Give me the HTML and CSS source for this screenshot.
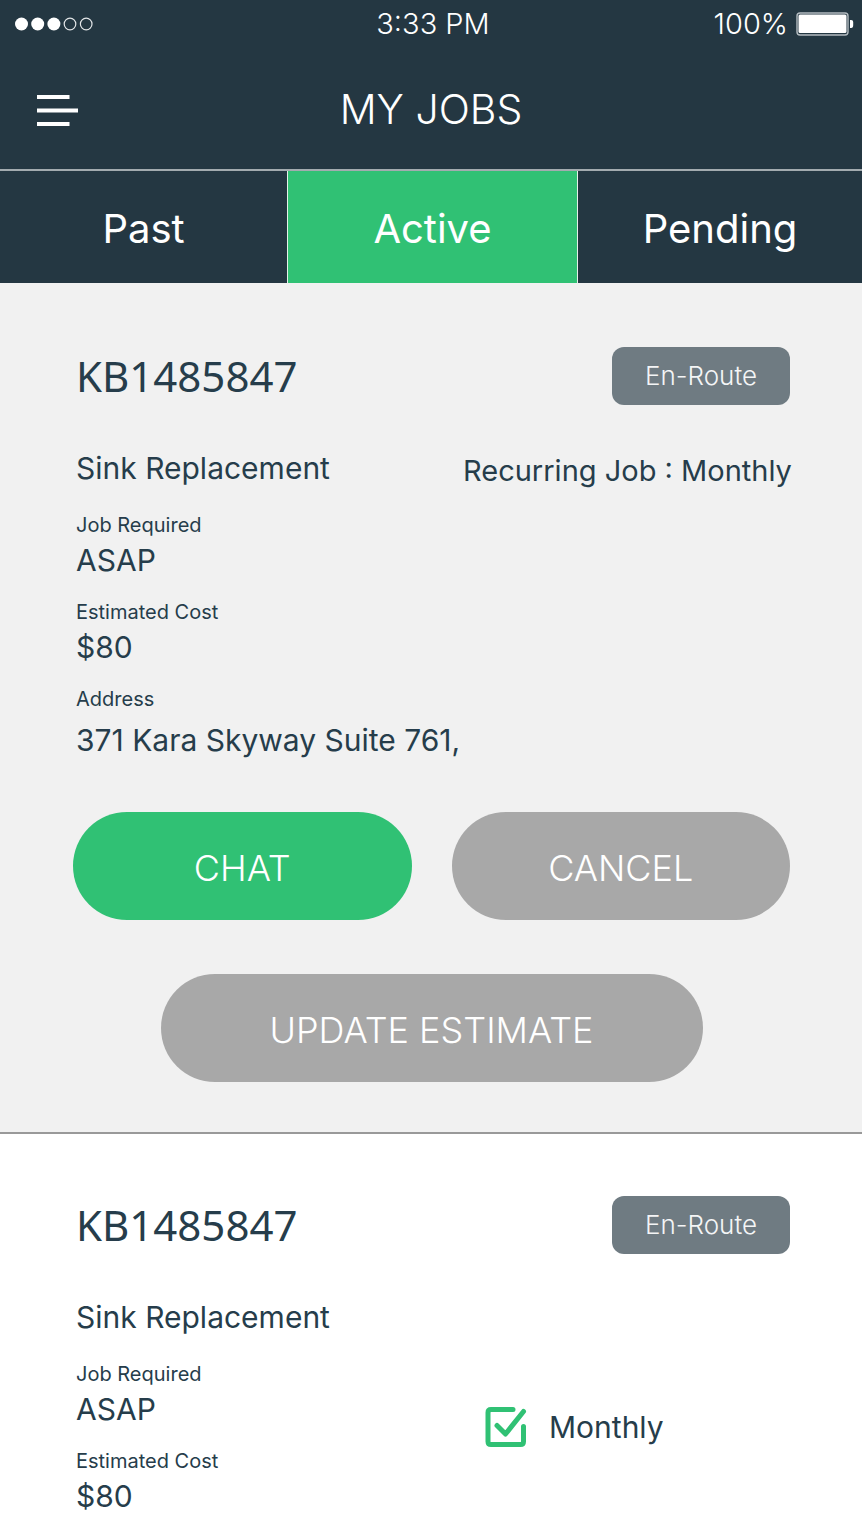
FILE: index.html
```html
<!DOCTYPE html>
<html lang="en">
<head>
<meta charset="utf-8">
<meta name="viewport" content="width=device-width, initial-scale=1">
<title>My Jobs</title>
<link rel="stylesheet" href="styles.css">
</head>
<body>
<header class="header">
  <div class="status">
    <svg class="signal" width="80" height="16" viewBox="0 0 80 16" aria-hidden="true">
      <g fill="#fff"><circle cx="7.500" cy="8" r="6.5"/><circle cx="23.700" cy="8" r="6.5"/><circle cx="39.900" cy="8" r="6.5"/></g>
      <g fill="none" stroke="#e3e6e8" stroke-width="1.2"><circle cx="56" cy="8" r="5.8"/><circle cx="72.200" cy="8" r="5.8"/></g>
    </svg>
    <span class="time">3:33 PM</span>
    <span class="battery">100%
      <svg width="58" height="24" viewBox="0 0 58 24" aria-hidden="true">
        <rect x="1" y="1" width="51" height="22" rx="3" fill="none" stroke="#b4bcc1" stroke-width="1.4"/>
        <rect x="2.5" y="2.5" width="48" height="18.5" rx="1.5" fill="#fff"/>
        <path d="M54 8h1.2q2 0 2 2v3q0 3-2 3H54z" fill="#fff"/>
      </svg>
    </span>
  </div>
  <div class="bar">
    <button class="menu" type="button" aria-label="Menu">
      <svg width="42" height="32" viewBox="0 0 42 32" aria-hidden="true">
        <path d="M1 2h32.500M1 15.500h41M1 29h32.500" fill="none" stroke="#fff" stroke-width="4"/>
      </svg>
    </button>
    <h1 class="title">MY JOBS</h1>
  </div>
  <nav class="tabs">
    <button class="tab" type="button">Past</button>
    <button class="tab tab-active" type="button" aria-current="page">Active</button>
    <button class="tab" type="button">Pending</button>
  </nav>
</header>
<main>
  <article class="job job-selected">
    <div class="job-head">
      <h2 class="job-id">KB1485847</h2>
      <span class="badge">En-Route</span>
    </div>
    <div class="job-body">
      <div>
        <h3 class="service">Sink Replacement</h3>
        <dl class="facts">
          <div class="fact"><dt>Job Required</dt><dd>ASAP</dd></div>
          <div class="fact"><dt>Estimated Cost</dt><dd>$80</dd></div>
          <div class="fact fact-address"><dt>Address</dt><dd>371 Kara Skyway Suite 761,</dd></div>
        </dl>
      </div>
      <p class="recurring">Recurring Job : Monthly</p>
    </div>
    <div class="actions">
      <button class="btn btn-primary" type="button">CHAT</button>
      <button class="btn" type="button">CANCEL</button>
      <button class="btn btn-wide" type="button">UPDATE ESTIMATE</button>
    </div>
  </article>
  <article class="job">
    <div class="job-head">
      <h2 class="job-id">KB1485847</h2>
      <span class="badge">En-Route</span>
    </div>
    <div class="job-body">
      <div>
        <h3 class="service">Sink Replacement</h3>
        <dl class="facts">
          <div class="fact"><dt>Job Required</dt><dd>ASAP</dd></div>
          <div class="fact"><dt>Estimated Cost</dt><dd>$80</dd></div>
        </dl>
      </div>
      <label class="repeat">
        <span class="check">
          <input type="checkbox" checked>
          <svg width="42" height="42" viewBox="0 0 42 42" aria-hidden="true">
            <g fill="none" stroke="#30c174" stroke-linecap="round" stroke-linejoin="round" stroke-width="5">
              <path d="M28 3.500H6Q3 3.500 3 6.500V35.500Q3 38.500 6 38.500H35.500Q38.500 38.500 38.500 35.500V20.500"/>
              <path class="tick" d="M12 19.500L20.500 28L38.500 5.500"/>
            </g>
          </svg>
        </span>
        Monthly
      </label>
    </div>
  </article>
</main>
</body>
</html>
```

FILE: styles.css
```css
* { box-sizing: border-box; }

body {
  margin: 0;
  background: #fff;
  color: #263d4b;
  font-family: Inter, "Liberation Sans", sans-serif;
  font-size: 30px;
  line-height: 40px;
}

h1, h2, h3, p, dl, dd { margin: 0; font-size: inherit; font-weight: 400; }

button { border: 0; font: inherit; cursor: pointer; }

svg { display: block; }

.header { background: #243742; color: #fff; }

.status {
  display: grid;
  grid-template-columns: 1fr auto 1fr;
  align-items: center;
  height: 48px;
  padding: 0 10px 0 14px;
  font-size: 29px;
  font-weight: 300;
}

.battery {
  display: flex;
  align-items: center;
  justify-content: flex-end;
  gap: 8px;
}

.battery svg { margin-right: -2px; }

.bar {
  display: grid;
  grid-template-columns: 1fr auto 1fr;
  align-items: center;
  height: 121px;
  padding: 0 36px;
}

.menu { justify-self: start; padding: 4px 0 0; background: none; }

.title { font-size: 41px; font-weight: 300; line-height: 48px; }

.tabs {
  display: grid;
  grid-template-columns: 287fr 291fr 284fr;
  border-top: 2px solid #a3abaf;
}

.tab {
  padding: 34px 0 30px;
  background: none;
  color: #fff;
  font-size: 40px;
  line-height: 48px;
}

.tab-active {
  border: 1px solid #e6f0ea;
  border-width: 0 1px;
  background: #30c174;
}

.job { padding: 64px 0 50px; }

.job + .job { border-top: 2px solid #999; padding-top: 62px; }

.job-selected { background: #f1f1f1; }

.job-head {
  display: flex;
  align-items: center;
  justify-content: space-between;
  padding: 0 72px 0 76px;
}

.job-id {
  font-family: "Noto Sans", sans-serif;
  font-size: 42px;
  line-height: 56px;
}

.badge {
  min-width: 178px;
  padding: 11px 24px;
  border-radius: 12px;
  background: #6f7b82;
  color: #f4f5f6;
  font-size: 26px;
  font-weight: 300;
  line-height: 36px;
  text-align: center;
}

.job-body {
  display: grid;
  grid-template-columns: minmax(0, 387fr) minmax(0, 341fr);
  align-items: start;
  margin-top: 43px;
  padding: 0 58px 0 76px;
  white-space: nowrap;
}

.facts { display: grid; gap: 18px; margin-top: 23px; }

.fact { display: grid; gap: 1px; }

.fact-address { gap: 7px; }

.fact dt { font-size: 20px; line-height: 28px; }

.recurring { padding-top: 3px; font-size: 29px; }

.repeat {
  display: flex;
  align-items: center;
  gap: 22px;
  padding: 109px 0 0 22px;
}

.check { position: relative; }

.check input {
  position: absolute;
  inset: 0;
  width: 100%;
  height: 100%;
  margin: 0;
  opacity: 0;
}

.check input:not(:checked) + svg .tick { visibility: hidden; }

.actions {
  display: grid;
  grid-template-columns: 1fr 1fr;
  gap: 54px 40px;
  margin-top: 52px;
  padding: 0 72px 0 73px;
}

.btn {
  height: 108px;
  padding: 4px 32px 0;
  border-radius: 54px;
  background: #a8a8a8;
  color: #fff;
  font-size: 36px;
  font-weight: 300;
}

.btn-primary { background: #30c174; }

.btn-wide { grid-column: 1 / -1; justify-self: center; min-width: 542px; }
```
